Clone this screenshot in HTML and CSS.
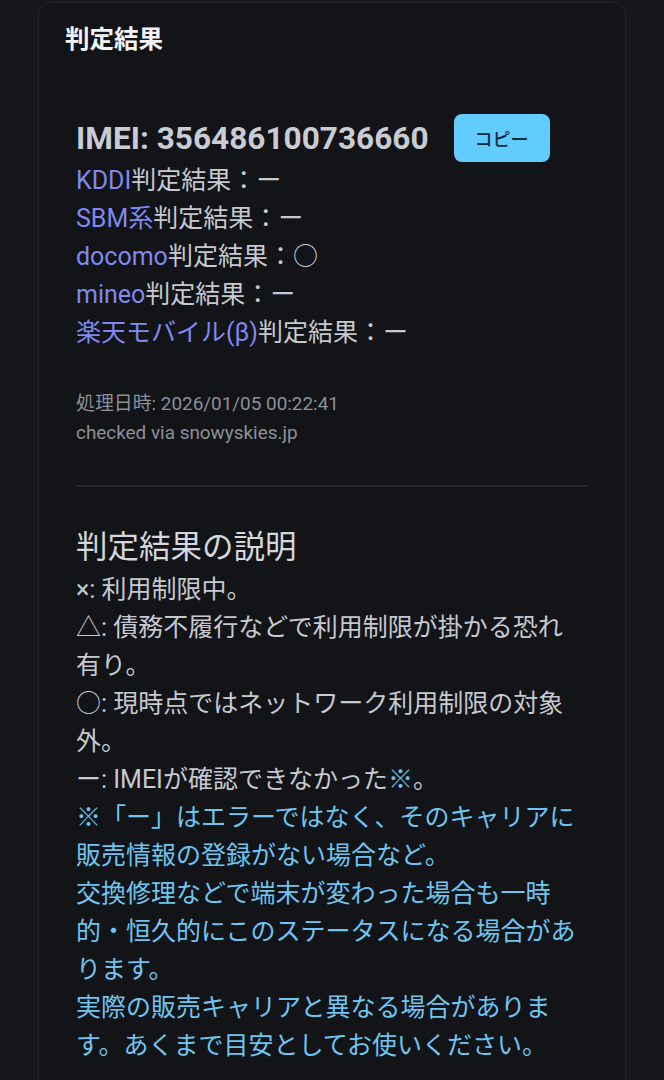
FILE: index.html
```html
<!DOCTYPE html>
<html lang="ja">
<head>
<meta charset="UTF-8">
<meta name="viewport" content="width=device-width, initial-scale=1.0">
<title>判定結果</title>
<link rel="stylesheet" href="styles.css">
</head>
<body>

<div class="page">
    <div class="card">
        <div class="card-header">判定結果</div>
        <div class="card-body">
            <div class="imei-row">
                <span class="imei">IMEI: 356486100736660</span>
                <button class="copy-btn">コピー</button>
            </div>

            <div class="results">
                <div><span class="carrier">KDDI</span>判定結果：ー</div>
                <div><span class="carrier">SBM系</span>判定結果：ー</div>
                <div><span class="carrier">docomo</span>判定結果：○</div>
                <div><span class="carrier">mineo</span>判定結果：ー</div>
                <div><span class="carrier">楽天モバイル(β)</span>判定結果：ー</div>
            </div>

            <div class="meta">
                <div>処理日時: 2026/01/05 00:22:41</div>
                <div>checked via snowyskies.jp</div>
            </div>

            <hr class="divider">

            <h2 class="legend-title">判定結果の説明</h2>
            <p class="legend">
                ×: 利用制限中。<br>
                △: 債務不履行などで利用制限が掛かる恐れ有り。<br>
                ○: 現時点ではネットワーク利用制限の対象外。<br>
                ー: IMEIが確認できなかった<span class="note">※</span>。<br>
                <span class="note">※「ー」はエラーではなく、そのキャリアに販売情報の登録がない場合など。<br>
                交換修理などで端末が変わった場合も一時的・恒久的にこのステータスになる場合があります。<br>
                実際の販売キャリアと異なる場合があります。あくまで目安としてお使いください。</span>
            </p>
        </div>
    </div>
</div>

</body>
</html>
```

FILE: styles.css
```css
/* Basic Styling */
body {
    margin: 0;
    background: #17181c;
    color: #c6c9cf;
    font-family: Roboto, "Noto Sans CJK JP", sans-serif;
}

.page {
    padding: 2px 38px 0;
}

.card {
    background: #131418;
    border: 1px solid #23252a;
    border-radius: 14px;
    min-height: 1100px;
}

.card-header {
    padding: 20px 26px 0;
    font-size: 24.5px;
    line-height: 33px;
    font-weight: bold;
    color: #f2f3f5;
}

.card-body {
    padding: 58px 37px 0;
}

/* IMEI + copy button */
.imei-row {
    display: flex;
    align-items: center;
    gap: 25px;
    height: 48px;
}

.imei {
    font-size: 31.6px;
    font-weight: bold;
    color: #c9ccd3;
}

.copy-btn {
    width: 96px;
    height: 48px;
    background: #62ccff;
    border: none;
    border-radius: 8px;
    color: #0b2b3d;
    font-family: "Noto Sans CJK JP", sans-serif;
    font-size: 18px;
    font-weight: 500;
    cursor: pointer;
}

/* Carrier results */
.results {
    font-size: 25px;
    line-height: 38px;
}

.carrier {
    color: #7f89ee;
}

.meta {
    margin-top: 37px;
    font-size: 18.9px;
    line-height: 29px;
    color: #8b9099;
}

.divider {
    margin: 38px 0 0;
    border: none;
    height: 2px;
    background: #24262b;
}

/* Legend */
.legend-title {
    margin: 38px 0 0;
    font-size: 31.5px;
    line-height: 46px;
    font-weight: normal;
    color: #d4d7dc;
}

.legend {
    margin: 0;
    max-width: 508px;
    font-size: 25px;
    line-height: 38px;
}

.note {
    color: #6fc5ef;
}
```
